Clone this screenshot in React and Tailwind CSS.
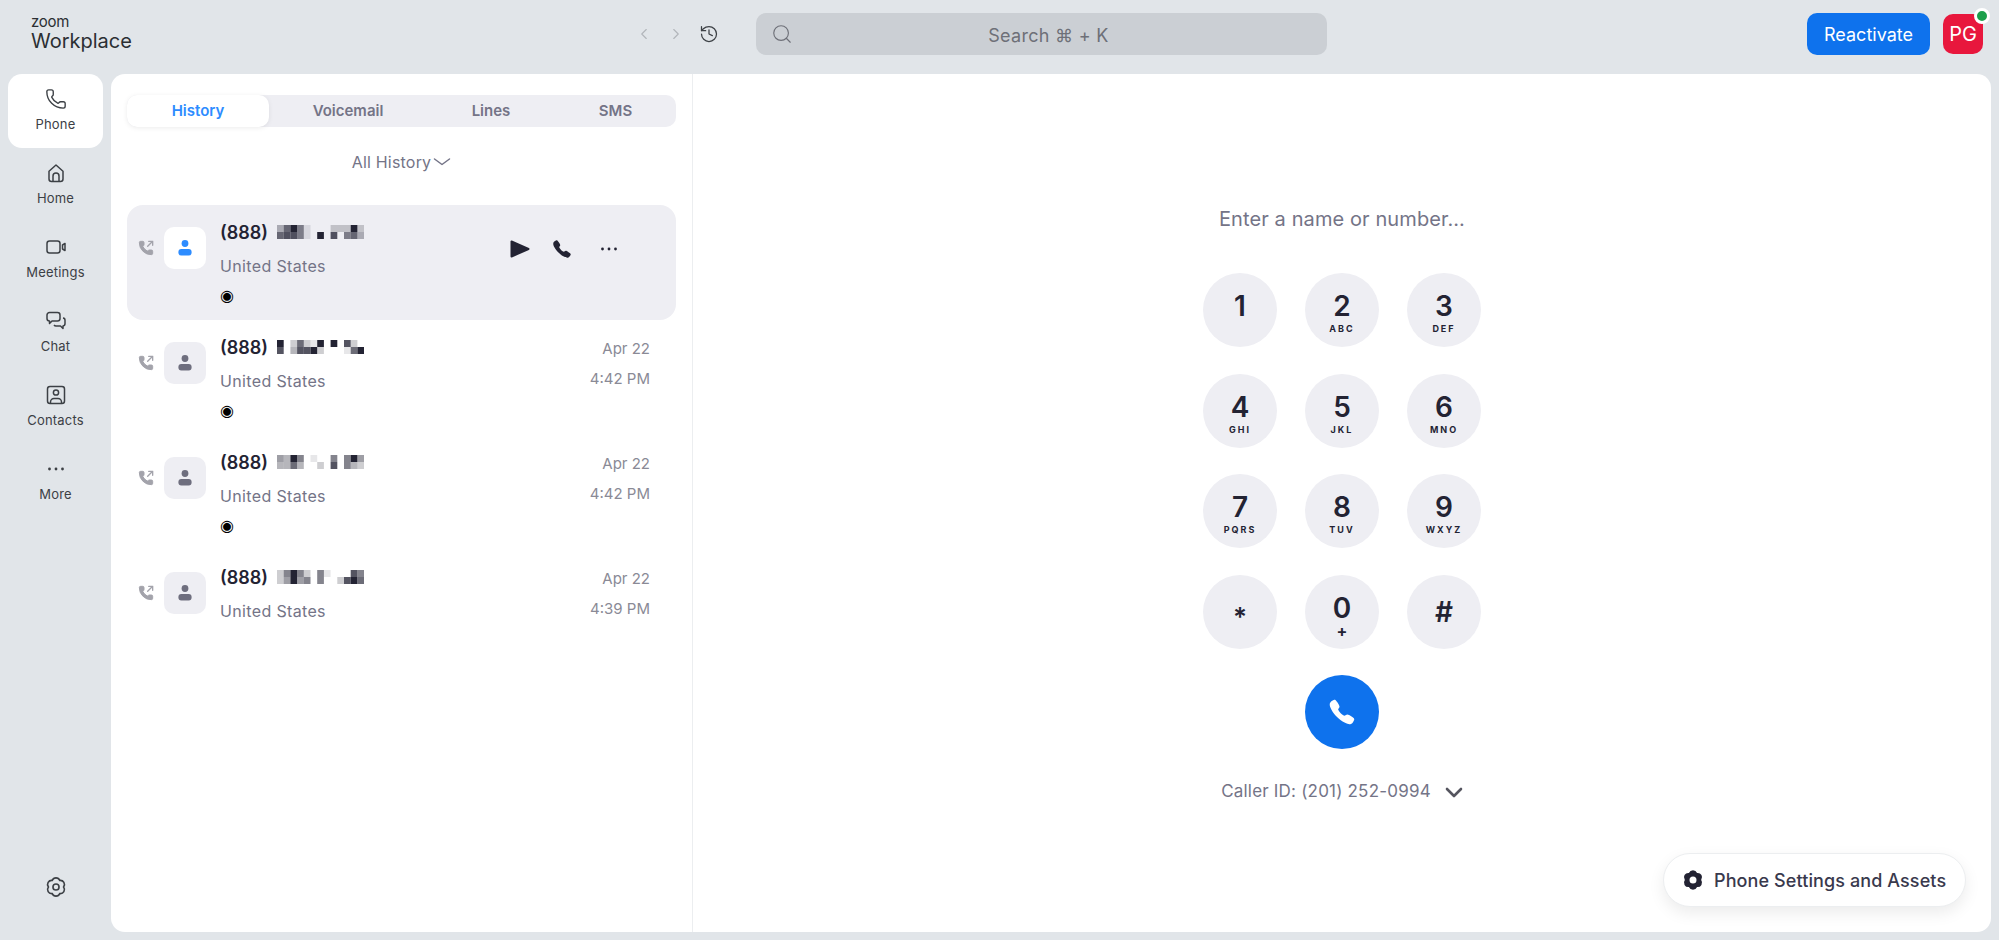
import React from 'react';
import { ChevronLeft, ChevronRight, History, Search, Phone } from 'lucide-react';
import { IoCall } from 'react-icons/io5';

const gearPath = 'M8.5 5.94A3.8 3.8 0 0 1 15.5 5.94A3.8 3.8 0 0 1 19 12A3.8 3.8 0 0 1 15.5 18.06A3.8 3.8 0 0 1 8.5 18.06A3.8 3.8 0 0 1 5 12A3.8 3.8 0 0 1 8.5 5.94Z';

const HomeIcon = () => (
  <svg width="22" height="22" viewBox="0 0 22 22" fill="none" stroke="currentColor" strokeWidth="1.5" strokeLinejoin="round">
    <path d="M4 9.2 11 3l7 6.2V17a2.5 2.5 0 0 1-2.5 2.5h-9A2.5 2.5 0 0 1 4 17Z" />
    <path d="M8 19.5V14a3 3 0 0 1 6 0v5.5" />
  </svg>
);

const VideoIcon = () => (
  <svg width="22" height="22" viewBox="0 0 22 22" fill="none" stroke="currentColor" strokeWidth="1.5" strokeLinejoin="round">
    <rect x="2" y="5" width="13" height="12" rx="2.5" />
    <path d="M20 7.5v7L17.5 13V9Z" />
  </svg>
);

const ChatIcon = () => (
  <svg width="22" height="22" viewBox="0 0 22 22" fill="none" stroke="currentColor" strokeWidth="1.5" strokeLinejoin="round">
    <path d="M4.5 2.5h8A2.5 2.5 0 0 1 15 5v3.5a2.5 2.5 0 0 1-2.5 2.5H7l-2.5 2.5V11A2.5 2.5 0 0 1 2 8.5V5a2.5 2.5 0 0 1 2.5-2.5Z" />
    <path d="M18 8a2.2 2.2 0 0 1 2 2.2v3.3a2.5 2.5 0 0 1-2 2.5v2.5L15.5 16H11a2.5 2.5 0 0 1-2-1" />
  </svg>
);

const ContactsIcon = () => (
  <svg width="22" height="22" viewBox="0 0 22 22" fill="none" stroke="currentColor" strokeWidth="1.5" strokeLinejoin="round">
    <rect x="2.5" y="2.5" width="17" height="17" rx="2.5" />
    <circle cx="11" cy="8.5" r="2.6" />
    <path d="M5.5 19.5v-1.5a3.5 3.5 0 0 1 3.5-3.5h4a3.5 3.5 0 0 1 3.5 3.5v1.5" />
  </svg>
);

const MoreIcon = ({ className }) => (
  <svg width="22" height="22" viewBox="0 0 22 22" fill="currentColor" className={className}>
    <circle cx="4.5" cy="11" r="1.4" />
    <circle cx="11" cy="11" r="1.4" />
    <circle cx="17.5" cy="11" r="1.4" />
  </svg>
);

const PersonIcon = ({ className }) => (
  <svg width="16" height="18" viewBox="0 0 16 18" fill="currentColor" className={className}>
    <circle cx="8" cy="4.5" r="3.4" />
    <rect x="1.4" y="10" width="13.2" height="6.6" rx="3" />
  </svg>
);

// handset with thin arrow, the lucide one is too light here
const OutgoingIcon = ({ className }) => (
  <svg width="16" height="16" viewBox="0 0 24 24" fill="none" stroke="currentColor" strokeLinecap="round" strokeLinejoin="round" className={className}>
    <path
      fill="currentColor"
      strokeWidth="1.5"
      d="M13.832 16.568a1 1 0 0 0 1.213-.303l.355-.465A2 2 0 0 1 17 15h3a2 2 0 0 1 2 2v3a2 2 0 0 1-2 2A18 18 0 0 1 2 4a2 2 0 0 1 2-2h3a2 2 0 0 1 2 2v3a2 2 0 0 1-.8 1.6l-.468.351a1 1 0 0 0-.292 1.233 14 14 0 0 0 6.392 6.384"
    />
    <path strokeWidth="2" d="M16 2h6v6M22 2l-7.5 7.5" />
  </svg>
);

const navItems = [
  { label: 'Phone', icon: <Phone size={22} strokeWidth={1.5} />, active: true },
  { label: 'Home', icon: <HomeIcon /> },
  { label: 'Meetings', icon: <VideoIcon /> },
  { label: 'Chat', icon: <ChatIcon /> },
  { label: 'Contacts', icon: <ContactsIcon /> },
  { label: 'More', icon: <MoreIcon /> },
];

const tabs = [
  { label: 'History', width: 'w-[142px]', active: true },
  { label: 'Voicemail', width: 'w-[158px]' },
  { label: 'Lines', width: 'w-[128px]' },
  { label: 'SMS', width: 'flex-1' },
];

const calls = [
  { top: '3695100022292', bottom: '6775109070563', recorded: true, active: true },
  { top: '9026219090720', bottom: '7037792000169', recorded: true, date: 'Apr 22', time: '4:42 PM' },
  { top: '4395010050594', bottom: '3363002070532', recorded: true, date: 'Apr 22', time: '4:42 PM' },
  { top: '2595205100075', bottom: '2494505002796', date: 'Apr 22', time: '4:39 PM' },
];

const keys = [
  ['1', ''], ['2', 'ABC'], ['3', 'DEF'],
  ['4', 'GHI'], ['5', 'JKL'], ['6', 'MNO'],
  ['7', 'PQRS'], ['8', 'TUV'], ['9', 'WXYZ'],
  ['*', ''], ['0', '+'], ['#', ''],
];

// blurred part of the number, each char is a darkness level
const Mosaic = ({ top, bottom }) => (
  <svg width="87" height="14" viewBox="0 0 87 14" className="blur-[0.5px]">
    {[top, bottom].map((row, r) =>
      row.split('').map((level, c) => (
        <rect key={`${r}-${c}`} x={c * 6.7} y={r * 7} width="6.7" height="7" fill="#232333" fillOpacity={Number(level) / 9} />
      ))
    )}
  </svg>
);

const CallRow = ({ call }) => (
  <div className={`flex h-[115px] rounded-2xl pl-[11px] pr-[26px] ${call.active ? 'bg-[#eeeef3]' : ''}`}>
    <OutgoingIcon className="mt-[35px] flex-none text-[#a3a3ab]" />
    <div className={`ml-[10px] mt-[22px] flex h-[42px] w-[42px] items-center justify-center rounded-[10px] ${call.active ? 'bg-white text-[#2d8cff]' : 'bg-[#eeeef3] text-[#6e6e7e]'}`}>
      <PersonIcon />
    </div>
    <div className="ml-[14px] flex flex-col pt-[15px]">
      <div className="flex h-6 items-center gap-[9px]">
        <span className="text-[18px] font-semibold text-[#232333]">(888)</span>
        <Mosaic top={call.top} bottom={call.bottom} />
      </div>
      <div className="mt-[10px] h-6 text-[16px] leading-6 tracking-[0.35px] text-[#747487]">United States</div>
      {call.recorded && (
        <div className="mt-[6px] h-6 font-['DejaVu_Sans'] text-[16px] leading-6 text-black">◉</div>
      )}
    </div>
    {call.active ? (
      <div className="ml-auto mr-[30px] mt-[33px] flex h-[22px] items-center text-[#232333]">
        <svg width="20" height="18" viewBox="0 0 20 18" fill="currentColor" stroke="currentColor" strokeWidth="2" strokeLinejoin="round">
          <path d="M1.5 1.5v15L18.5 9Z" />
        </svg>
        <IoCall size={20} className="ml-[22px]" />
        <MoreIcon className="ml-[26px]" />
      </div>
    ) : (
      <div className="ml-auto flex flex-col items-end pt-[17px] text-[15px] leading-6 text-[#8a8a96]">
        <span>{call.date}</span>
        <span className="mt-[6px]">{call.time}</span>
      </div>
    )}
  </div>
);

export default function App() {
  return (
    <div className="flex h-[940px] w-full flex-col overflow-hidden bg-[#e1e5e9] font-['Inter',sans-serif] text-[#232333]">
      {/* Top bar */}
      <header className="flex h-[74px] flex-none items-center pb-[6px]">
        <div className="flex w-[756px] flex-none items-center pr-[37px]">
          <div className="ml-[31px] flex flex-col self-start text-[#2b2f33]">
            <span className="h-[14px] text-[15px] leading-[14px] tracking-[-0.3px]">zoom</span>
            <span className="h-6 text-[20px] leading-6">Workplace</span>
          </div>
          <div className="ml-auto flex items-center gap-[14px]">
            <ChevronLeft size={18} strokeWidth={1.5} className="text-[#b1b5ba]" />
            <ChevronRight size={18} strokeWidth={1.5} className="text-[#b1b5ba]" />
            <History size={20} strokeWidth={1.5} className="text-[#3c4045]" />
          </div>
        </div>
        <div className="relative flex h-[42px] w-[571px] flex-none items-center justify-center rounded-[10px] bg-[#cbcfd4] pl-[14px] pt-[2px] text-[18px] tracking-[0.3px] text-[#6e7078]">
          <Search size={22} strokeWidth={1.25} className="absolute left-[15px] top-[10px] text-[#6e7078]" />
          Search ⌘ + K
        </div>
        <button className="ml-auto h-[42px] w-[123px] rounded-[10px] bg-[#0e72ed] pt-[1px] text-[18px] text-white">Reactivate</button>
        <div className="relative ml-[13px] mr-4 flex h-10 w-10 items-center justify-center rounded-[10px] bg-[#e8173d] text-[20px] text-white">
          PG
          <span className="absolute -right-[7px] -top-[6px] h-4 w-4 rounded-full border-[3px] border-white bg-[#1c9f4b]" />
        </div>
      </header>

      <div className="flex min-h-0 flex-1">
        {/* Side nav */}
        <nav className="flex w-[111px] flex-none flex-col px-2 pb-[40px]">
          {navItems.map((item) => (
            <div
              key={item.label}
              className={`flex h-[74px] w-[95px] flex-none flex-col items-center gap-[5px] rounded-[14px] pt-[14px] text-[13px] leading-[18px] tracking-[0.2px] text-[#3c4045] ${item.active ? 'bg-white' : ''}`}
            >
              {item.icon}
              <span>{item.label}</span>
            </div>
          ))}
          <div className="mt-auto flex w-[95px] justify-center text-[#3c4045]">
            <svg width="26" height="26" viewBox="0 0 24 24" fill="none" stroke="currentColor" strokeWidth="1.5">
              <path d={gearPath} />
              <circle cx="12" cy="12" r="2.8" />
            </svg>
          </div>
        </nav>

        {/* Main panel */}
        <main className="relative mb-2 mr-2 flex min-w-0 flex-1 rounded-[14px] bg-white">
          <section className="w-[582px] flex-none border-r border-[#eceef0] px-4">
            <div className="mt-[21px] flex h-8 items-center rounded-[10px] bg-[#eeeef3] text-[15px] font-semibold text-[#747487]">
              {tabs.map((tab) => (
                <div
                  key={tab.label}
                  className={`flex h-8 items-center justify-center ${tab.width} ${tab.active ? 'rounded-[10px] bg-white text-[#2d8cff] shadow-[0_1px_5px_rgba(0,0,0,0.08)]' : ''}`}
                >
                  {tab.label}
                </div>
              ))}
            </div>
            <div className="mt-[23px] flex h-6 items-center justify-center gap-[2px] text-[16px] tracking-[0.2px] text-[#747487]">
              All History
              <svg width="18" height="10" viewBox="0 0 18 10" fill="none" stroke="currentColor" strokeWidth="1.5" strokeLinecap="round" strokeLinejoin="round">
                <path d="M1.5 2 9 7.5 16.5 2" />
              </svg>
            </div>
            <div className="mt-[31px] flex flex-col">
              {calls.map((call, i) => <CallRow key={i} call={call} />)}
            </div>
          </section>

          <section className="flex min-w-0 flex-1 flex-col items-center">
            <div className="mt-[131px] h-7 text-[20px] leading-7 tracking-[0.1px] text-[#747487]">Enter a name or number...</div>
            <div className="mt-[40px] grid grid-cols-[74px_74px_74px] gap-x-[28px] gap-y-[26.5px]">
              {keys.map(([digit, sub]) => (
                <div
                  key={digit}
                  className={`flex h-[74px] w-[74px] flex-col items-center rounded-full bg-[#eeeef3] ${digit === '*' || digit === '#' ? 'justify-center' : 'pt-[16px]'}`}
                >
                  <span className={`font-semibold text-[#232333] ${digit === '*' ? 'h-[14px] translate-y-[-5px] text-[26px] leading-[34px]' : 'h-[34px] text-[28px] leading-[34px]'}`}>{digit}</span>
                  {sub && (
                    <span className={`h-3 font-bold leading-3 text-[#232333] ${sub === '+' ? 'text-[16px]' : 'text-[9px] tracking-[2px]'}`}>{sub}</span>
                  )}
                </div>
              ))}
              <div className="col-start-2 flex h-[74px] w-[74px] items-center justify-center rounded-full bg-[#0e72ed] text-white">
                <IoCall size={28} />
              </div>
            </div>
            <div className="mt-[31px] flex h-6 items-center gap-[14px] text-[17px] tracking-[0.2px] text-[#747487]">
              Caller ID: (201) 252-0994
              <svg width="18" height="11" viewBox="0 0 18 11" fill="none" stroke="#55555f" strokeWidth="2.6" strokeLinecap="round" strokeLinejoin="round">
                <path d="M2 2l7 7 7-7" />
              </svg>
            </div>
          </section>

          <div className="absolute bottom-[25px] right-[25px] flex h-[54px] w-[303px] items-center gap-[7px] rounded-full border border-[#eceef0] bg-white pl-[15px] text-[18px] font-medium tracking-[0.1px] text-[#39394d] shadow-[0_6px_16px_rgba(0,0,0,0.08)]">
            <svg width="28" height="28" viewBox="0 0 24 24" fill="#232333" fillRule="evenodd">
              <path d={`${gearPath}M12 9a3 3 0 1 0 0 6a3 3 0 1 0 0-6Z`} />
            </svg>
            Phone Settings and Assets
          </div>
        </main>
      </div>
    </div>
  );
}
